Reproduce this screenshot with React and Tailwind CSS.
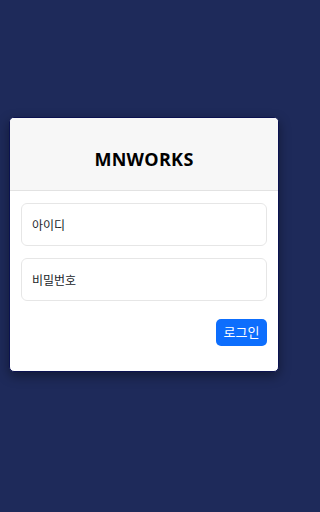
export default function App() {
  return (
    <div className="w-full min-h-screen bg-[#1e2a5a]" style={{ fontFamily: '"Open Sans", "Noto Sans CJK KR", sans-serif' }}>
      <div className="w-[288px] pt-[117px] px-[9px]">
        <div className="w-[270px] h-[255px] bg-white rounded-[5px] border border-[#0b1250] shadow-[0_4px_12px_rgba(0,0,0,0.4)] overflow-hidden">
          <div className="h-[73px] bg-[#f7f7f7] border-b border-[#e2e2e2] flex items-center justify-center pt-[11px]">
            <h1 className="text-[18px] font-bold text-black tracking-[0.3px]">MNWORKS</h1>
          </div>
          <div className="px-[11px] pt-[12px] flex flex-col">
            <div className="h-[43px] rounded-[6px] border border-[#e6e6e6] flex items-center px-[10px] pt-[2px] text-[12px] text-[#212529]">아이디</div>
            <div className="h-[43px] mt-[12px] rounded-[6px] border border-[#e6e6e6] flex items-center px-[10px] pt-[2px] text-[12px] text-[#212529]">비밀번호</div>
            <div className="flex justify-end mt-[18px]">
              <button className="w-[51px] h-[27px] rounded-[5px] bg-[#0d6efd] text-white text-[13px]">로그인</button>
            </div>
          </div>
        </div>
      </div>
    </div>
  );
}
